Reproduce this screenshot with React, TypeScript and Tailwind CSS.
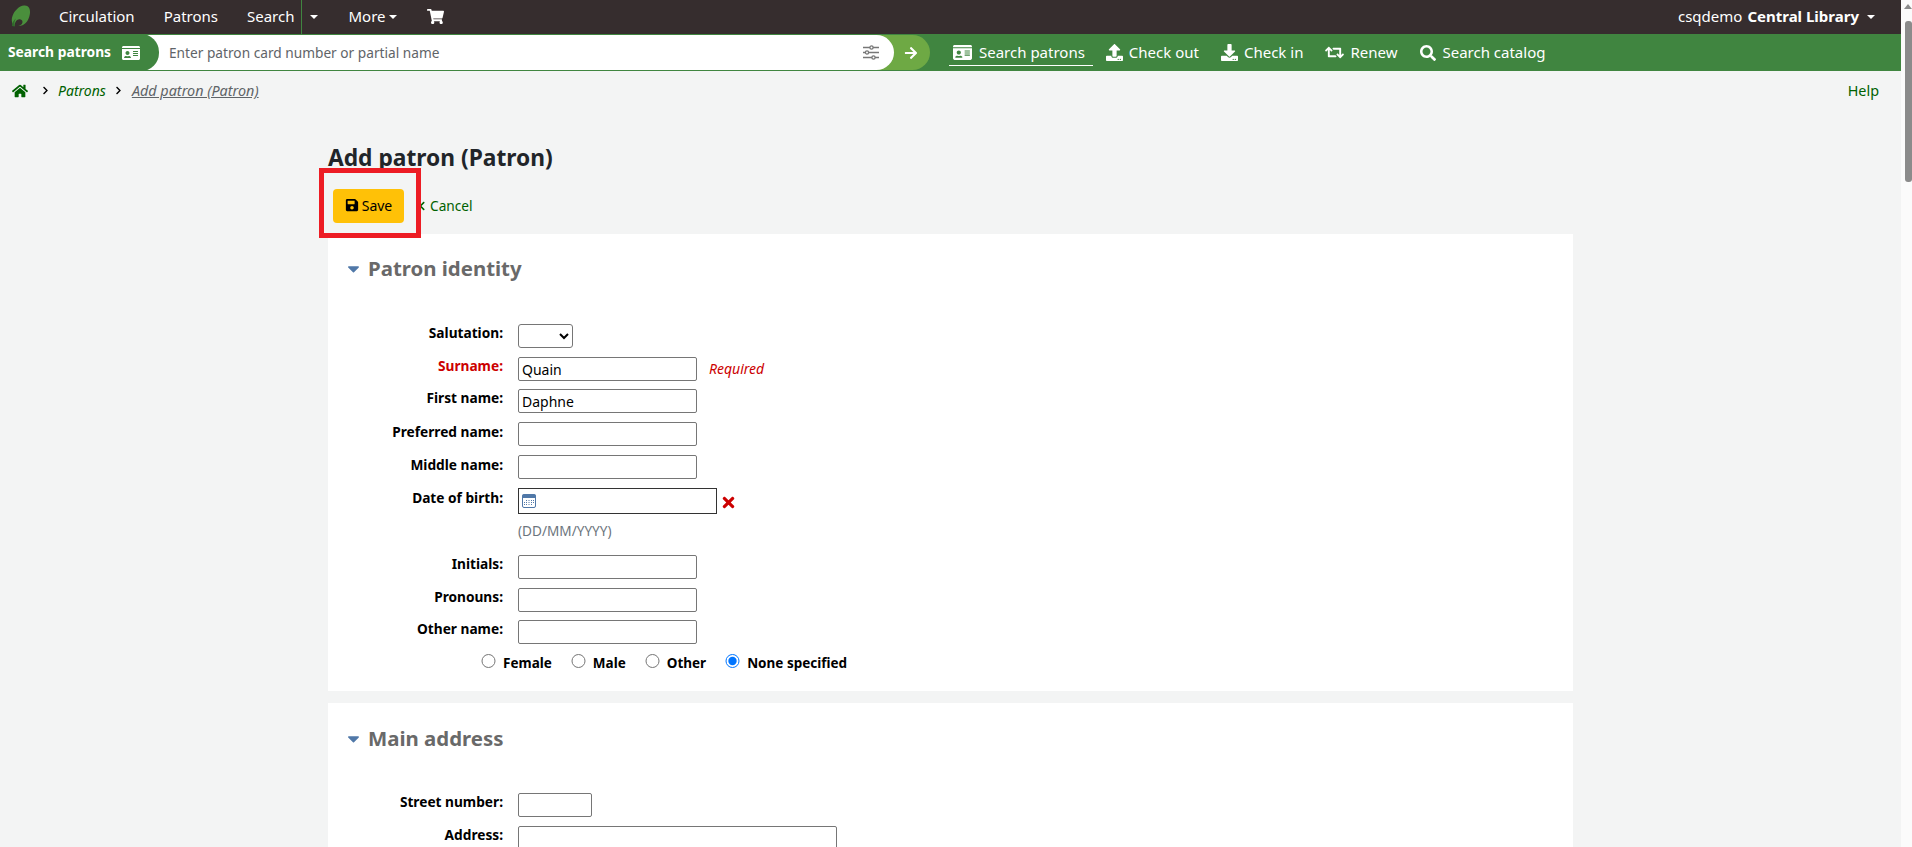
import { FaCaretDown, FaChevronLeft, FaChevronRight, FaDownload, FaArrowRight, FaHome, FaIdCard, FaRetweet, FaSave, FaSearch, FaShoppingCart, FaTimes, FaUpload } from 'react-icons/fa';
import type { ReactNode } from 'react';

function Caret({ className = '' }: { className?: string }) {
  return <span className={`inline-block h-0 w-0 border-x-[4px] border-t-[4px] border-x-transparent border-t-current ${className}`} />;
}

function Logo() {
  return (
    <svg width="20" height="24" viewBox="0 0 20 24" className="ml-[11px]">
      <path d="M13 0.500C17 0 19.500 3 19 8c-.5 5-3 10-7 12-2 1-3.500 1-4.500 0 2 .5 4-.5 4-3 0-2-2-3-4-2.500C5 15 3.500 18 3.500 21.500 1 19 0 15 1.500 11 3.500 5.500 8 1 13 .5z" fill="#4a8f3c" />
      <path d="M1 21c0-3 1.500-6 4-7.500-1.500 2-2 5-1.500 8z" fill="#2f6a2b" />
    </svg>
  );
}

function Sliders() {
  return (
    <svg width="16" height="15" viewBox="0 0 16 15" fill="none" stroke="#777" strokeWidth="1.300" className="ml-auto">
      <path d="M0 2.500h7M10 2.500h6M0 7.500h2.500M5.500 7.500H16M0 12.500h9M12 12.500h4" />
      <circle cx="8.500" cy="2.500" r="1.600" />
      <circle cx="4" cy="7.500" r="1.600" />
      <circle cx="10.500" cy="12.500" r="1.600" />
    </svg>
  );
}

function Row({ label, h, children, red, nudge }: { label: string; h: string; children: ReactNode; red?: boolean; nudge?: boolean }) {
  return (
    <div className={`flex items-start ${h}`}>
      <label className={`w-[175px] text-right text-[13.700px] leading-[18px] font-bold ${nudge ? 'pt-[1px]' : ''} ${red ? 'text-[#cc0000]' : 'text-black'}`}>{label}</label>
      <div className="ml-[15px] flex items-start">{children}</div>
    </div>
  );
}

function TextInput({ value = '', w = 'w-[179px]' }: { value?: string; w?: string }) {
  return (
    <input
      readOnly
      value={value}
      className={`h-[24px] rounded-[2px] border border-[#767676] bg-white px-[3px] text-[14px] text-black ${w}`}
    />
  );
}

function Radio({ label, checked, gap }: { label: string; checked?: boolean; gap: string }) {
  return (
    <label className={`flex items-center font-bold ${gap}`}>
      <input type="radio" readOnly checked={!!checked} className="m-0 h-[14px] w-[15px] -translate-y-[2px] accent-[#0075ff]" />
      <span className="ml-[7px] text-[13.500px] leading-[20px] text-black">{label}</span>
    </label>
  );
}

function Legend({ children }: { children: ReactNode }) {
  return (
    <div className="flex items-center">
      <FaCaretDown className="ml-[16px] text-[19px] text-[#5078a8]" />
      <h2 className="ml-[5px] text-[20.400px] leading-[28px] font-bold text-[#696969]">{children}</h2>
    </div>
  );
}

const tools = [
  { label: 'Search patrons', icon: <FaIdCard className="text-[19px]" />, cls: 'gap-[7px] pl-[4px] pr-[8px] -mr-[5px] border-b-[1.500px] border-white' },
  { label: 'Check out', icon: <FaUpload className="text-[17px]" />, cls: 'gap-[6px] px-[4px]' },
  { label: 'Check in', icon: <FaDownload className="text-[17px]" />, cls: 'gap-[6px] px-[4px]' },
  { label: 'Renew', icon: <FaRetweet className="text-[19px]" />, cls: 'gap-[6px] px-[4px]' },
  { label: 'Search catalog', icon: <FaSearch className="text-[16px]" />, cls: 'gap-[6px] px-[4px] ml-[1px]' },
];

export default function App() {
  return (
    <div className="flex h-[847px] overflow-hidden bg-white font-['Noto_Sans','Open_Sans',sans-serif] text-[14px]">
      <div className="relative h-full min-w-0 flex-1 overflow-hidden bg-[#f3f4f4]">
        {/* top nav */}
        <nav className="flex h-[34px] items-center bg-[#362d2e] pb-[1px] text-[15px] text-white">
          <Logo />
          <a className="ml-[28px]">Circulation</a>
          <a className="ml-[29px]">Patrons</a>
          <a className="ml-[29px]">Search</a>
          <span className="ml-[7px] flex h-[34px] w-[30px] items-center border-l border-[#408540] pl-[8px]">
            <Caret />
          </span>
          <a className="ml-[17px] flex items-center gap-[3px]">
            More <Caret />
          </a>
          <FaShoppingCart className="ml-[30px] text-[17px]" />
          <div className="ml-auto mr-[26px] flex items-center">
            <span>csqdemo</span>
            <span className="ml-[5px] font-bold">Central Library</span>
            <Caret className="ml-[8px]" />
          </div>
        </nav>

        {/* green search bar */}
        <div className="flex h-[37px] items-center bg-[#408540] text-white">
          <div className="relative flex h-full items-center">
            <div className="z-20 flex h-full w-[159px] items-center rounded-r-[18px] bg-[#408540] pl-[8px] text-[13.800px] font-bold">
              Search patrons
              <FaIdCard className="ml-[11px] text-[18px]" />
            </div>
            <div className="z-10 -ml-[20px] flex h-[35px] w-[755px] items-center rounded-r-[18px] bg-white pl-[30px] pr-[15px]">
              <span className="pt-[1px] text-[13.700px] text-[#5f6468]">Enter patron card number or partial name</span>
              <Sliders />
            </div>
            <div className="-ml-[18px] flex h-[35px] w-[54px] items-center rounded-r-[18px] bg-[#6ea944] pl-[28px]">
              <FaArrowRight className="text-[14px]" />
            </div>
          </div>
          <ul className="ml-[19px] flex items-center gap-[14px]">
            {tools.map((t) => (
              <li key={t.label} className={`flex h-[26px] items-center text-[15px] ${t.cls}`}>
                {t.icon}
                {t.label}
              </li>
            ))}
          </ul>
        </div>

        {/* breadcrumb */}
        <div className="flex h-[39px] items-center pl-[12px] pr-[22px] text-[14.400px] text-[#006100]">
          <FaHome className="text-[16px]" />
          <FaChevronRight className="ml-[13px] text-[9px] text-black" />
          <a className="ml-[8px] text-[14px] italic">Patrons</a>
          <FaChevronRight className="ml-[8px] text-[9px] text-black" />
          <a className="ml-[9px] italic text-[#5f6468] underline">Add patron (Patron)</a>
          <a className="ml-auto">Help</a>
        </div>

        {/* page */}
        <main className="ml-[328px] w-[1245px]">
          <h1 className="mt-[33px] text-[22.750px] leading-[30px] font-bold text-[#212529]">Add patron (Patron)</h1>
          <div className="mt-[16px] flex items-center">
            <button className="ml-[5px] flex h-[34px] w-[71px] items-center justify-center gap-[3px] rounded-[4px] bg-[#ffc107] pb-[2px] text-[14px] text-black">
              <FaSave className="text-[14px]" />
              Save
            </button>
            <a className="ml-[13px] flex items-center text-[13.700px] text-[#006100]">
              <FaChevronLeft className="mr-[3px] text-[10px]" />
              Cancel
            </a>
          </div>

          <section className="mt-[11px] h-[457px] bg-white pt-[20px]">
            <Legend>Patron identity</Legend>
            <div className="mt-[42px]">
              <Row label="Salutation:" h="h-[33px]">
                <select className="h-[24px] w-[55px] rounded-[3px] border border-[#767676] bg-white text-[14px]" />
              </Row>
              <Row label="Surname:" h="h-[32px]" red>
                <TextInput value="Quain" />
                <span className="ml-[12px] text-[14px] leading-[24px] italic text-[#cc0000]">Required</span>
              </Row>
              <Row label="First name:" h="h-[33px]">
                <TextInput value="Daphne" />
              </Row>
              <Row label="Preferred name:" h="h-[33px]" nudge>
                <TextInput />
              </Row>
              <Row label="Middle name:" h="h-[33px]" nudge>
                <TextInput />
              </Row>
              <Row label="Date of birth:" h="h-[67px]" nudge>
                <div>
                  <div className="flex items-center">
                    <div className="flex h-[26px] w-[199px] items-center border border-[#333] bg-white pl-[3px]">
                      <svg width="14" height="14" viewBox="0 0 14 14">
                        <rect x="0.500" y="0.500" width="13" height="13" rx="1.500" fill="#fff" stroke="#5078a8" />
                        <rect x="0.500" y="0.500" width="13" height="3.500" fill="#5078a8" />
                        <path d="M4 6h1v1H4zM6.500 6h1v1h-1zM9 6h1v1H9zM11 6h1v1h-1zM2 8h1v1H2zM4 8h1v1H4zM6.500 8h1v1h-1zM9 8h1v1H9zM11 8h1v1h-1zM2 10h1v1H2zM4 10h1v1H4zM6.500 10h1v1h-1zM9 10h1v1H9z" fill="#5078a8" />
                      </svg>
                    </div>
                    <FaTimes className="ml-[3px] mt-[3px] text-[17px] text-[#cc0000]" />
                  </div>
                  <div className="mt-[8px] text-[13.600px] leading-[18px] text-[#6c757d]">(DD/MM/YYYY)</div>
                </div>
              </Row>
              <Row label="Initials:" h="h-[33px]">
                <TextInput />
              </Row>
              <Row label="Pronouns:" h="h-[32px]">
                <TextInput />
              </Row>
              <Row label="Other name:" h="h-[33px]">
                <TextInput />
              </Row>
              <div className="ml-[153px] flex items-center">
                <Radio label="Female" gap="mr-[19px]" />
                <Radio label="Male" gap="mr-[19px]" />
                <Radio label="Other" gap="mr-[19px]" />
                <Radio label="None specified" checked gap="" />
              </div>
            </div>
          </section>

          <section className="mt-[12px] h-[300px] bg-white pt-[21px]">
            <Legend>Main address</Legend>
            <div className="mt-[41px]">
              <Row label="Street number:" h="h-[33px]">
                <TextInput w="w-[74px]" />
              </Row>
              <Row label="Address:" h="h-[33px]">
                <TextInput w="w-[319px]" />
              </Row>
            </div>
          </section>
        </main>

        {/* annotation box round the save button */}
        <div className="pointer-events-none absolute left-[319px] top-[168px] h-[70px] w-[102px] border-[5px] border-[#ed1c24]" />
      </div>

      {/* scrollbar */}
      <div className="relative w-[11px] bg-[#fbfbfb]">
        <div className="absolute left-[3px] top-[4px] h-0 w-0 border-x-[4px] border-b-[5px] border-x-transparent border-b-[#8b8b8b]" />
        <div className="absolute left-[4px] top-[21px] h-[161px] w-[7px] rounded-[3px] bg-[#8b8b8b]" />
      </div>
    </div>
  );
}
